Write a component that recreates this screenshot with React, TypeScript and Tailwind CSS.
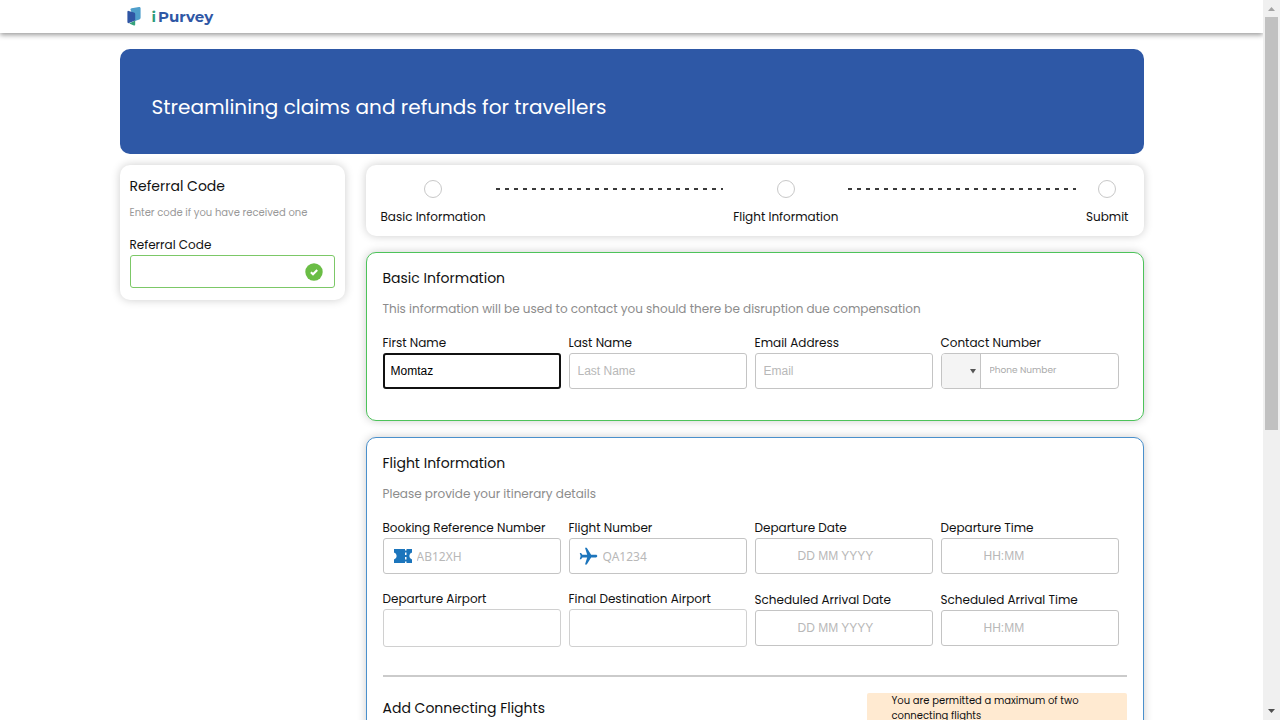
import type { ReactNode } from "react";
import { MdFlight } from "react-icons/md";

const boxClass =
  "block w-full rounded-[3px] bg-white text-xs text-black outline-none placeholder:text-[#b8b8b8] placeholder:opacity-100";
const cardShadow = "shadow-[0_0_10px_rgba(0,0,0,0.2)]";

function Logo() {
  return (
    <a href="#home" className="flex items-center gap-[11px]" aria-label="iPurvey">
      <svg width="14" height="20" viewBox="0 0 14 20" aria-hidden="true">
        <path d="M3.4 2.6 Q3.4 1.6 4.6 1.3 L12 0 Q13.6 -.2 13.6 1.3 V10.8 Q13.6 12 12.4 12.4 L8 14 Z" fill="#4f9fcb" />
        <path d="M2.2 16.4 L8.2 13.4 V17.4 Q8.2 18.8 6.9 18.4 Z" fill="#35a27c" />
        <path d="M.4 5 Q.4 3.5 1.7 3.9 L7 5.4 Q8.2 5.8 8.2 7 V13.4 L2 16.1 Q.4 16.5 .4 15.100 Z" fill="#2f55a4" />
      </svg>
      <span className="flex gap-0.5 font-['Montserrat','Poppins',sans-serif] text-[15px] leading-5 font-bold text-[#2f57a5]">
        <span className="text-[#2f9c7c]">i</span>
        <span>Purvey</span>
      </span>
    </a>
  );
}

function TicketIcon() {
  return (
    <svg width="18" height="14" viewBox="0 0 18 14" fill="#1c75bc" aria-hidden="true">
      <path d="M0 0 H11 V1.5 H12.5 V0 H18 V3.6 A3.5 3.5 0 0 0 18 10.4 V14 H12.5 V12.5 H11 V14 H0 V10.4 A3.5 3.5 0 0 0 0 3.6 Z" />
      <path d="M11 3.5h1.5v2.500h-1.500zM11 8h1.500v2.500h-1.500z" fill="#fff" />
    </svg>
  );
}

function Step({ label }: { label: string }) {
  return (
    <li className="flex flex-col items-center gap-[9px]">
      <span className="size-[18px] rounded-full border border-[#c8c8c8]" />
      <span className="text-xs leading-5 whitespace-nowrap">{label}</span>
    </li>
  );
}

function StepLine() {
  return (
    <li
      aria-hidden="true"
      className="mx-2.5 mt-2 h-0.5 flex-1 bg-[repeating-linear-gradient(90deg,#3a3a3a_0_4px,transparent_4px_9px)]"
    />
  );
}

type FieldProps = {
  id: string;
  label: string;
  placeholder?: string;
  value?: string;
  icon?: ReactNode;
  box: string;
};

function Field({ id, label, placeholder, value, icon, box }: FieldProps) {
  return (
    <div>
      <label htmlFor={id} className="block text-xs leading-5 whitespace-nowrap">
        {label}
      </label>
      <div className="relative">
        {icon && <span className="absolute inset-y-0 left-2.5 flex w-5 items-center justify-center">{icon}</span>}
        <input id={id} type="text" placeholder={placeholder} defaultValue={value} className={`${boxClass} ${box}`} />
      </div>
    </div>
  );
}

const plain = "h-9 px-2 border border-[#c4c4c4] font-['Liberation_Sans',sans-serif]";
const focused = "h-9 px-1.5 border-2 border-[#111111] font-['Liberation_Sans',sans-serif]";
const withIcon = "h-9 pl-[33px] pr-2 border border-[#c4c4c4] font-['Noto_Sans',sans-serif]";
const dateBox = "h-9 pl-[42px] pr-2 border border-[#c4c4c4] font-['Liberation_Sans',sans-serif]";
const airport = "h-[38px] px-2 border border-[#d0d0d0]";

function SectionHead({ title, note }: { title: string; note: string }) {
  return (
    <>
      <h2 className="text-sm leading-5">{title}</h2>
      <p className="mt-[11px] text-xs leading-5 text-[#8c8c8c]">{note}</p>
    </>
  );
}

export default function App() {
  return (
    <div className="flex h-screen overflow-hidden bg-white font-['Poppins','Inter',sans-serif] text-[#111111]">
      <div className="min-w-0 flex-1 overflow-hidden">
        <header className="h-[33px] bg-white shadow-[0_2px_5px_rgba(0,0,0,0.4)]">
          <div className="mx-auto flex h-full max-w-5xl items-center px-[7px]">
            <Logo />
          </div>
        </header>

        <main className="mx-auto max-w-5xl pt-4">
          <section className="rounded-[10px] bg-[#2e58a6] px-8 pt-[43px] pb-8">
            <h1 className="text-xl leading-[30px] text-white">Streamlining claims and refunds for travellers</h1>
          </section>

          <div className="mt-[11px] flex items-start gap-[21px]">
            <aside className={`w-[225px] shrink-0 rounded-[10px] bg-white px-2.5 pt-[11px] pb-3 ${cardShadow}`}>
              <h2 className="text-sm leading-5">Referral Code</h2>
              <p className="mt-[9px] text-[10px] leading-4 text-[#999999]">Enter code if you have received one</p>
              <label htmlFor="referral" className="mt-3.5 block text-xs leading-5">
                Referral Code
              </label>
              <div className="relative">
                <input
                  id="referral"
                  type="text"
                  className="block h-[33px] w-full rounded-[3px] border border-[#7cc867] px-2 pr-9 text-xs outline-none"
                />
                <svg className="absolute top-2 right-3" width="18" height="18" viewBox="0 0 18 18" aria-hidden="true">
                  <circle cx="9" cy="9" r="8.7" fill="#6abd45" />
                  <path d="M5.9 9.3 L8 11.300 L12.200 7" fill="none" stroke="#fff" strokeWidth="2.1" />
                </svg>
              </div>
            </aside>

            <div className="flex min-w-0 flex-1 flex-col gap-4">
              <ol className={`flex rounded-[10px] bg-white px-[15px] pt-[15px] pb-[9px] ${cardShadow}`}>
                <Step label="Basic Information" />
                <StepLine />
                <Step label="Flight Information" />
                <StepLine />
                <Step label="Submit" />
              </ol>

              <section className={`rounded-[10px] border border-[#4dc35a] bg-white px-4 pt-[15px] pb-[31px] ${cardShadow}`}>
                <SectionHead
                  title="Basic Information"
                  note="This information will be used to contact you should there be disruption due compensation"
                />
                <div className="mt-3.5 mr-2 grid grid-cols-4 gap-x-2">
                  <Field id="first" label="First Name" value="Momtaz" box={focused} />
                  <Field id="last" label="Last Name" placeholder="Last Name" box={plain} />
                  <Field id="email" label="Email Address" placeholder="Email" box={plain} />
                  <div>
                    <label htmlFor="phone" className="block text-xs leading-5">
                      Contact Number
                    </label>
                    <div className="flex h-9 overflow-hidden rounded-[4px] border border-[#c4c4c4]">
                      <div className="relative w-[39px] shrink-0 border-r border-[#c4c4c4] bg-[#f4f4f4]">
                        <select aria-label="Country code" className="block size-full appearance-none outline-none">
                          <option value=""></option>
                        </select>
                        <svg className="pointer-events-none absolute top-[15px] right-1" width="6" height="5" viewBox="0 0 6 5" aria-hidden="true">
                          <path d="M0 0h6L3 4.6z" fill="#555" />
                        </svg>
                      </div>
                      <input
                        id="phone"
                        type="tel"
                        placeholder="Phone Number"
                        className="min-w-0 flex-1 px-[9px] text-[9px] outline-none placeholder:text-[#aaaaaa]"
                      />
                    </div>
                  </div>
                </div>
              </section>

              <section className={`rounded-[10px] border border-[#4a90cc] bg-white px-4 pt-[15px] pb-8 ${cardShadow}`}>
                <SectionHead title="Flight Information" note="Please provide your itinerary details" />
                <div className="mt-3.5 mr-2 grid grid-cols-4 items-center gap-x-2 gap-y-[15px]">
                  <Field id="booking" label="Booking Reference Number" placeholder="AB12XH" icon={<TicketIcon />} box={withIcon} />
                  <Field
                    id="flight"
                    label="Flight Number"
                    placeholder="QA1234"
                    icon={<MdFlight size={21} color="#1c75bc" className="shrink-0 rotate-90" />}
                    box={withIcon}
                  />
                  <Field id="depdate" label="Departure Date" placeholder="DD MM YYYY" box={dateBox} />
                  <Field id="deptime" label="Departure Time" placeholder="HH:MM" box={dateBox} />
                  <Field id="depair" label="Departure Airport" box={airport} />
                  <Field id="destair" label="Final Destination Airport" box={airport} />
                  <Field id="arrdate" label="Scheduled Arrival Date" placeholder="DD MM YYYY" box={dateBox} />
                  <Field id="arrtime" label="Scheduled Arrival Time" placeholder="HH:MM" box={dateBox} />
                </div>
                <hr className="mt-7 border-t-2 border-[#cbcbcb]" />
                <div className="mt-4 flex items-start justify-between">
                  <h2 className="pt-[5px] text-sm leading-5">Add Connecting Flights</h2>
                  <p className="w-[260px] rounded-[2px] bg-[#ffead1] px-[25px] pb-4 text-[10px] leading-[15px]">
                    You are permitted a maximum of two connecting flights
                  </p>
                </div>
              </section>
            </div>
          </div>
        </main>
      </div>

      <div aria-hidden="true" className="flex w-[17px] shrink-0 flex-col items-center bg-[#f0f0f0]">
        <svg className="shrink-0" width="17" height="17" viewBox="0 0 17 17">
          <path d="M5 11h7L8.5 7z" fill="#a3a3a3" />
        </svg>
        <div className="h-[57.4%] w-[13px] bg-[#c1c1c1]" />
        <svg className="mt-auto shrink-0" width="17" height="17" viewBox="0 0 17 17">
          <path d="M5 6h7L8.5 10z" fill="#505050" />
        </svg>
      </div>
    </div>
  );
}
